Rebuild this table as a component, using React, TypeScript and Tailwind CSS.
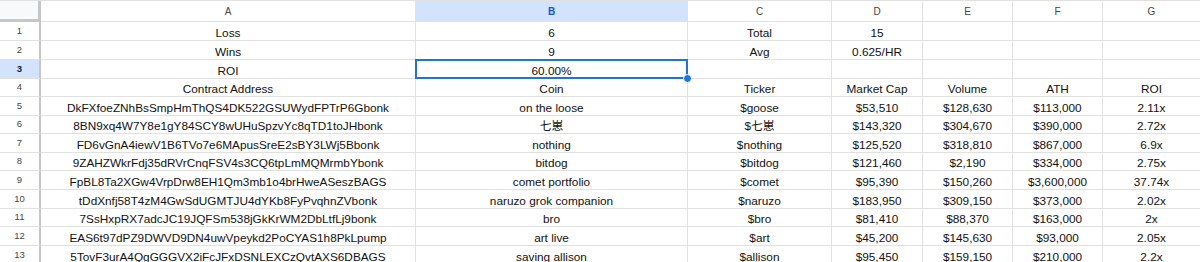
import React from 'react'

const cols = [
  { key: 'A', w: 'w-[375px]' },
  { key: 'B', w: 'w-[272px]' },
  { key: 'C', w: 'w-[144px]' },
  { key: 'D', w: 'w-[91px]' },
  { key: 'E', w: 'w-[90px]' },
  { key: 'F', w: 'w-[90px]' },
  { key: 'G', w: 'w-[98px]' },
]

const heights = [
  'h-[19px]', 'h-[19px]', 'h-[19px]', 'h-[18px]', 'h-[19px]', 'h-[18px]', 'h-[19px]',
  'h-[18px]', 'h-[19px]', 'h-[19px]', 'h-[18px]', 'h-[19px]', 'h-[19px]',
]

const rows: string[][] = [
  ['Loss', '6', 'Total', '15', '', '', ''],
  ['Wins', '9', 'Avg', '0.625/HR', '', '', ''],
  ['ROI', '60.00%', '', '', '', '', ''],
  ['Contract Address', 'Coin', 'Ticker', 'Market Cap', 'Volume', 'ATH', 'ROI'],
  ['DkFXfoeZNhBsSmpHmThQS4DK522GSUWydFPTrP6Gbonk', 'on the loose', '$goose', '$53,510', '$128,630', '$113,000', '2.11x'],
  ['8BN9xq4W7Y8e1gY84SCY8wUHuSpzvYc8qTD1toJHbonk', '七崽', '$七崽', '$143,320', '$304,670', '$390,000', '2.72x'],
  ['FD6vGnA4iewV1B6TVo7e6MApusSreE2sBY3LWj5Bbonk', 'nothing', '$nothing', '$125,520', '$318,810', '$867,000', '6.9x'],
  ['9ZAHZWkrFdj35dRVrCnqFSV4s3CQ6tpLmMQMrmbYbonk', 'bitdog', '$bitdog', '$121,460', '$2,190', '$334,000', '2.75x'],
  ['FpBL8Ta2XGw4VrpDrw8EH1Qm3mb1o4brHweASeszBAGS', 'comet portfolio', '$comet', '$95,390', '$150,260', '$3,600,000', '37.74x'],
  ['tDdXnfj58T4zM4GwSdUGMTJU4dYKb8FyPvqhnZVbonk', 'naruzo grok companion', '$naruzo', '$183,950', '$309,150', '$373,000', '2.02x'],
  ['7SsHxpRX7adcJC19JQFSm538jGkKrWM2DbLtfLj9bonk', 'bro', '$bro', '$81,410', '$88,370', '$163,000', '2x'],
  ['EAS6t97dPZ9DWVD9DN4uwVpeykd2PoCYAS1h8PkLpump', 'art live', '$art', '$45,200', '$145,630', '$93,000', '2.05x'],
  ['5TovF3urA4QgGGGVX2iFcJFxDSNLEXCzQvtAXS6DBAGS', 'saving allison', '$allison', '$95,450', '$159,150', '$210,000', '2.2x'],
]

export default function App() {
  return (
    <div className="w-[1200px] h-[262px] overflow-hidden bg-white font-['Liberation_Sans','Noto_Sans_CJK_SC',sans-serif]">
      {/* column letters */}
      <div className="flex h-[22px] border-t border-[#e1e1e1]">
        <div className="w-[41px] shrink-0 bg-[#f8f9fa] border-r-[3px] border-b-[3px] border-[#c4c7c5]" />
        {cols.map((c) => (
          <div
            key={c.key}
            className={`${c.w} shrink-0 flex items-center justify-center border-r border-b border-[#e1e1e1] text-[10px] ${
              c.key === 'B' ? 'bg-[#d3e3fd] text-[#0b57d0] font-bold' : 'text-[#444746]'
            }`}
          >
            {c.key}
          </div>
        ))}
      </div>

      {/* sheet rows */}
      {rows.map((r, i) => (
        <div key={i} className={`flex ${heights[i]}`}>
          <div
            className={`w-[41px] shrink-0 flex items-center justify-center border-r-2 border-r-[#c4c7c5] border-b border-b-[#e1e1e1] text-[9.5px] ${
              i === 2 ? 'bg-[#d3e3fd] text-[#041e49] font-bold' : 'text-[#444746]'
            }`}
          >
            {i + 1}
          </div>
          {r.map((v, j) => (
            <div
              key={j}
              className={`${cols[j].w} shrink-0 relative flex items-end justify-center border-r border-b border-[#e1e1e1] text-[11.8px] leading-[14px] text-[#111] whitespace-nowrap`}
            >
              {v}
              {i === 2 && j === 1 && (
                <>
                  <div className="absolute -left-px -top-px -right-px -bottom-px border-2 border-[#1a73e8]" />
                  <div className="absolute -right-[5px] -bottom-[5px] w-[9px] h-[9px] rounded-full bg-[#1a73e8] border border-white z-10" />
                </>
              )}
            </div>
          ))}
        </div>
      ))}
    </div>
  )
}
